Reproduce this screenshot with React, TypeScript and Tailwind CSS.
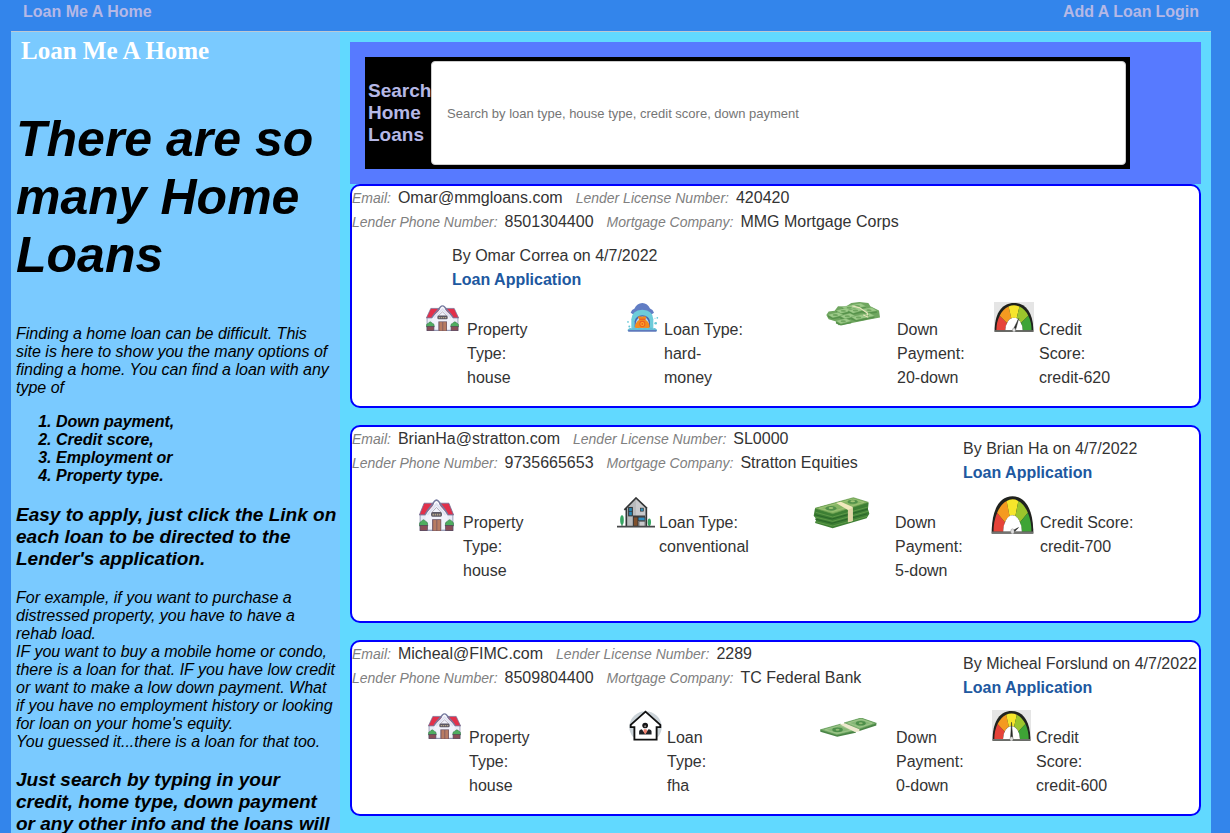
import React from "react";

function HouseIcon({ className }: { className: string }) {
  return (
    <svg className={className} viewBox="0 0 96 76" preserveAspectRatio="none" aria-hidden="true">
      <polygon points="14,10 40,10 28,38 1,38" fill="#e2304a" stroke="#6c6f96" strokeWidth="2" />
      <polygon points="82,10 56,10 68,38 95,38" fill="#e2304a" stroke="#6c6f96" strokeWidth="2" />
      <rect x="3" y="38" width="90" height="36" fill="#e9ebf6" stroke="#7c80a3" strokeWidth="2" />
      <polygon points="48,7 78,35 78,74 18,74 18,35" fill="#f1f2fb" />
      <path d="M17 37 L24 27 L42 6 Q48 -1 54 6 L72 27 L79 37" fill="none" stroke="#757a9f" strokeWidth="4" />
      <path d="M23 38 L48 12 L73 38" fill="none" stroke="#dde1f0" strokeWidth="4" />
      <path d="M36 31 L48 20 L60 31" fill="none" stroke="#a59eaa" strokeWidth="2" />
      <rect x="33" y="31" width="30" height="11" rx="4" fill="#5b5763" />
      <path d="M37 37h22" stroke="#b5a68a" strokeWidth="4" strokeDasharray="4 2" />
      <rect x="36" y="48" width="25" height="28" fill="#6c5261" />
      <rect x="39" y="50" width="9" height="25" fill="#b87b62" />
      <rect x="50" y="50" width="9" height="25" fill="#b87b62" />
      <path d="M1 64 Q0 54 7 53 Q12 45 18 53 Q25 54 24 64Z" fill="#4fad60" stroke="#3c7552" strokeWidth="1.5" />
      <path d="M72 64 Q71 54 78 53 Q84 45 90 53 Q96 54 95 64Z" fill="#4fad60" stroke="#3c7552" strokeWidth="1.5" />
      <rect x="3" y="63" width="20" height="12" fill="#8b4d58" stroke="#5a455b" strokeWidth="2" />
      <rect x="73" y="63" width="20" height="12" fill="#8b4d58" stroke="#5a455b" strokeWidth="2" />
      <path d="M22 74h14m25 0h12" stroke="#777b9c" strokeWidth="2" />
    </svg>
  );
}

function HardMoneyIcon({ className }: { className: string }) {
  return (
    <svg className={className} viewBox="0 0 96 86" preserveAspectRatio="none" aria-hidden="true">
      <path d="M11 29 Q14 19 22 17 Q30 1 46 0 Q62 1 69 16 Q78 19 81 29 L74 33 H18Z" fill="#617dc4" />
      <path d="M13 78 V48 Q14 22 46 20 Q78 22 79 48 V78Z" fill="#6dccda" />
      <path d="M23 72 V54 Q26 37 46 36 Q66 37 69 54 V72Z" fill="#4565b4" />
      <path d="M27 56 Q32 41 46 40 Q60 41 65 56 V73 H25Z" fill="#b8dceb" />
      <path d="M34 45 Q31 39 38 39 L45 41 L53 39 Q60 39 57 45 L54 49 Q69 57 68 74 H23 Q24 57 38 49Z" fill="#f38b1d" />
      <path d="M36 48h20" stroke="#e5552c" strokeWidth="3" />
      <circle cx="46" cy="62" r="9" fill="#ed5e22" />
      <circle cx="46" cy="62" r="4.5" fill="none" stroke="#ffae29" strokeWidth="3" />
      <path d="M2 79 Q8 71 15 76 Q23 70 31 76 Q38 71 46 76 Q54 71 61 76 Q69 70 77 76 Q84 71 90 79 V83 H2Z" fill="#62bfd7" />
      <rect x="3" y="80" width="86" height="5" rx="2" fill="#5e79bc" />
      <circle cx="3" cy="56" r="2.5" fill="#65c7d6" />
      <circle cx="7" cy="70" r="3" fill="#65c7d6" />
      <circle cx="86" cy="60" r="4" fill="#65c7d6" />
      <circle cx="91" cy="44" r="2.5" fill="#65c7d6" />
      <circle cx="84" cy="45" r="1.5" fill="#65c7d6" />
    </svg>
  );
}

function ModernHouseIcon({ className }: { className: string }) {
  return (
    <svg className={className} viewBox="0 0 114 92" preserveAspectRatio="none" aria-hidden="true">
      <polygon points="57,5 87,33 87,87 29,87 29,32" fill="#c9cacc" />
      <polygon points="57,7 57,57 48,57 48,87 29,87 29,32" fill="#b9bbbd" />
      <path d="M22 38 L57 3 L90 34 M28 31 V87 M88 32 V87" fill="none" stroke="#333536" strokeWidth="5" />
      <rect x="35" y="31" width="11" height="25" fill="#2987b4" stroke="#333" strokeWidth="3" />
      <path d="M35 43h11" stroke="#333" strokeWidth="2" />
      <rect x="70" y="33" width="9" height="9" fill="#2c91bd" stroke="#333" strokeWidth="2" />
      <path d="M48 57 H84" stroke="#333" strokeWidth="4" />
      <rect x="62" y="60" width="22" height="10" fill="#2c8fc2" stroke="#333" strokeWidth="2" />
      <rect x="49" y="59" width="14" height="28" fill="#80502c" stroke="#333" strokeWidth="3" />
      <rect x="66" y="73" width="18" height="14" fill="#c9cacc" stroke="#555" strokeWidth="2" />
      <path d="M15 61V87M97 72V87" stroke="#34764a" strokeWidth="3" />
      <ellipse cx="15" cy="68" rx="5.5" ry="14" fill="#37a563" />
      <ellipse cx="97" cy="75" rx="5" ry="11" fill="#37a563" />
      <path d="M0 88H114" stroke="#47494a" strokeWidth="5" />
    </svg>
  );
}

function FhaIcon({ className }: { className: string }) {
  return (
    <svg className={className} viewBox="0 0 98 94" preserveAspectRatio="none" aria-hidden="true">
      <path d="M12 82 A48 48 0 1 1 86 82Z" fill="#ccd4d9" />
      <path d="M16 90V52H5V45L49 5L93 45V52H82V90Z" fill="#fff" stroke="#101010" strokeWidth="5.5" />
      <circle cx="48" cy="47" r="8.5" fill="#171717" />
      <circle cx="48" cy="49" r="3" fill="#8d8683" />
      <path d="M30 74V65Q30 59 38 58L48 71L58 58Q67 59 67 65V74Z" fill="#202226" />
      <path d="M41 57L48 70L56 57Z" fill="#fff" />
      <path d="M44 58h8l2 7-6 9-5-9Z" fill="#ef826f" />
    </svg>
  );
}

function CashPileIcon({ className }: { className: string }) {
  const bundles = [
    [74, 2, 4], [48, 8, 2], [108, 14, 6], [30, 18, 1], [66, 18, -2],
    [6, 31, 1], [100, 32, 3], [42, 35, 0], [76, 38, 2], [30, 50, 1],
  ];
  return (
    <svg className={className} viewBox="0 0 162 74" preserveAspectRatio="none" aria-hidden="true">
      <path d="M1 40L8 29L26 27L36 13L60 14L76 3L100 0L127 3L133 13L159 26L162 48L130 54L100 60L70 66L38 72L30 60L8 53Z" fill="#6fa65f" />
      {bundles.map(([x, y, r]) => (
        <g key={`${x}-${y}`} transform={`translate(${x} ${y}) rotate(${r})`}>
          <path d="M0 8L30 0L46 8L15 17Z" fill="#9dcb89" stroke="#75aa66" strokeWidth="1" />
          <path d="M0 10L15 18L46 10V15L15 22L0 16Z" fill="#56924b" />
          <ellipse cx="22" cy="9" rx="8" ry="3" fill="#6fa65f" />
        </g>
      ))}
      <path d="M79 12l22 6 23 16v8M112 40l15 7" fill="none" stroke="#e6e5bd" strokeWidth="4" />
    </svg>
  );
}

function CashStackIcon({ className }: { className: string }) {
  return (
    <svg className={className} viewBox="0 0 168 96" preserveAspectRatio="none" aria-hidden="true">
      <path d="M6 34L119 3L164 17L162 36L166 50L158 64L58 94L6 78L10 66L2 56Z" fill="#3d7f34" />
      <path d="M8 74L58 87L160 58M6 60L58 73L162 43M8 46L58 60L162 30" fill="none" stroke="#6fa552" strokeWidth="2" />
      <path d="M6 66L56 79L160 50M6 53L56 66L162 36" fill="none" stroke="#2b6629" strokeWidth="3" />
      <path d="M6 34L119 2L163 16L58 50Z" fill="#86b664" stroke="#669a4a" strokeWidth="2" />
      <path d="M18 34L117 7L150 16L59 43Z" fill="none" stroke="#a5c67d" strokeWidth="2" />
      <ellipse cx="53" cy="34" rx="16" ry="7" fill="#53914a" />
      <ellipse cx="53" cy="33" rx="7" ry="3" fill="#a0c575" />
      <ellipse cx="117" cy="14" rx="15" ry="6" fill="#53914a" />
      <ellipse cx="117" cy="13" rx="7" ry="3" fill="#a0c575" />
      <path d="M68 18L82 14L117 30V72L103 76V39Z" fill="#f1e9bd" />
      <path d="M103 39L117 32V72L103 76Z" fill="#e0d6a6" />
    </svg>
  );
}

function CashNotesIcon({ className }: { className: string }) {
  return (
    <svg className={className} viewBox="0 0 172 58" preserveAspectRatio="none" aria-hidden="true">
      <path d="M1 37L61 20L108 40V45L52 57L1 42Z" fill="#4a8446" />
      <path d="M73 16L124 0L170 16V23L119 40L73 21Z" fill="#4a8446" />
      <path d="M1 36L61 19L108 38L51 52Z" fill="#85b776" stroke="#5d9854" strokeWidth="2" />
      <path d="M73 15L124 0L170 16L119 34Z" fill="#85b776" stroke="#5d9854" strokeWidth="2" />
      <path d="M16 36L60 23L94 37L52 47Z" fill="none" stroke="#a9cb92" strokeWidth="2" />
      <path d="M86 15L124 4L157 16L120 28Z" fill="none" stroke="#a9cb92" strokeWidth="2" />
      <ellipse cx="53" cy="36" rx="16" ry="7" fill="#4d8f4a" />
      <ellipse cx="53" cy="36" rx="6" ry="3" fill="#8fba74" />
      <ellipse cx="123" cy="16" rx="15" ry="7" fill="#4d8f4a" />
      <ellipse cx="123" cy="16" rx="6" ry="3" fill="#8fba74" />
      <path d="M60 20L75 16L119 34V41L105 43Z" fill="#eee9cf" />
    </svg>
  );
}

const WEDGES = ["#e64339", "#f49a20", "#f6e52b", "#9bc52c", "#3ea436"];

function gaugePoint(rx: number, ry: number, degrees: number) {
  const a = (degrees * Math.PI) / 180;
  return `${(60 - rx * Math.cos(a)).toFixed(1)} ${(85 - ry * Math.sin(a)).toFixed(1)}`;
}

function GaugeIcon({ className, needle, reach, plain }: { className: string; needle: number; reach: number; plain?: boolean }) {
  return (
    <svg className={className} viewBox="0 0 120 90" preserveAspectRatio="none" aria-hidden="true">
      {!plain && <rect width="120" height="90" fill="#e5e5e5" />}
      <path d="M2 89V80C4 31 25 3 60 3S116 31 118 80V89Z" fill="#20221e" />
      {WEDGES.map((color, i) => (
        <path
          key={color}
          fill={color}
          d={`M${gaugePoint(53, 75, i * 36)} A53 75 0 0 1 ${gaugePoint(53, 75, (i + 1) * 36)} L${gaugePoint(26, 38, (i + 1) * 36)} A26 38 0 0 0 ${gaugePoint(26, 38, i * 36)}Z`}
        />
      ))}
      <path d="M34 85A26 38 0 0 1 86 85Z" fill="#fff" />
      <path d="M2 87H118" stroke="#72736f" strokeWidth="5" />
      <path d={`M57 84L${gaugePoint(reach, reach * 1.45, needle)}L64 86Z`} fill="#292a28" stroke="#292a28" strokeWidth="1.5" />
      <ellipse cx="60" cy="84" rx="5" ry="6" fill="#dedede" stroke="#777" strokeWidth="1" />
    </svg>
  );
}

type Feature = { icon: React.ReactNode; lines: string[] };

type Loan = {
  email: string;
  license: string;
  phone: string;
  company: string;
  author: string;
  stacked?: boolean;
  columns: string;
  features: Feature[];
};

const loans: Loan[] = [
  {
    email: "Omar@mmgloans.com",
    license: "420420",
    phone: "8501304400",
    company: "MMG Mortgage Corps",
    author: "Omar Correa",
    stacked: true,
    columns: "pl-[74px] pb-4 grid-cols-[41px_160px_37px_162px_71px_97px_45px_1fr]",
    features: [
      { icon: <HouseIcon className="mt-[3px] h-[26px] w-[33px]" />, lines: ["Property", "Type:", "house"] },
      { icon: <HardMoneyIcon className="mt-px h-[29px] w-[32px]" />, lines: ["Loan Type:", "hard-", "money"] },
      { icon: <CashPileIcon className="h-[24px] w-[54px]" />, lines: ["Down", "Payment:", "20-down"] },
      { icon: <GaugeIcon className="h-[30px] w-[40px]" needle={120} reach={28} />, lines: ["Credit", "Score:", "credit-620"] },
    ],
  },
  {
    email: "BrianHa@stratton.com",
    license: "SL0000",
    phone: "9735665653",
    company: "Stratton Equities",
    author: "Brian Ha",
    columns: "pl-[67px] pb-[38px] grid-cols-[44px_154px_42px_154px_82px_96px_49px_1fr]",
    features: [
      { icon: <HouseIcon className="mt-[4px] h-[32px] w-[35px]" />, lines: ["Property", "Type:", "house"] },
      { icon: <ModernHouseIcon className="mt-[2px] h-[31px] w-[38px]" />, lines: ["Loan Type:", "conventional"] },
      { icon: <CashStackIcon className="mt-[2px] h-[32px] w-[57px]" />, lines: ["Down", "Payment:", "5-down"] },
      { icon: <GaugeIcon className="h-[39px] w-[43px]" needle={158} reach={18} plain />, lines: ["Credit Score:", "credit-700"] },
    ],
  },
  {
    email: "Micheal@FIMC.com",
    license: "2289",
    phone: "8509804400",
    company: "TC Federal Bank",
    author: "Micheal Forslund",
    columns: "pl-[76px] pb-4 grid-cols-[41px_160px_38px_153px_76px_96px_44px_1fr]",
    features: [
      { icon: <HouseIcon className="mt-[3px] h-[26px] w-[33px]" />, lines: ["Property", "Type:", "house"] },
      { icon: <FhaIcon className="h-[31px] w-[33px]" />, lines: ["Loan", "Type:", "fha"] },
      { icon: <CashNotesIcon className="mt-[8px] h-[19px] w-[57px]" />, lines: ["Down", "Payment:", "0-down"] },
      { icon: <GaugeIcon className="h-[31px] w-[39px]" needle={90} reach={34} />, lines: ["Credit", "Score:", "credit-600"] },
    ],
  },
];

function Field({ name, value }: { name: string; value: string }) {
  return (
    <div className="flex items-baseline gap-[7px]">
      <dt className="text-sm leading-6 italic text-[#808080]">{name}:</dt>
      <dd>{value}</dd>
    </div>
  );
}

function LoanCard({ loan }: { loan: Loan }) {
  return (
    <article className="rounded-[10px] border-2 border-[#0000ff] bg-white text-base leading-6 text-[#333]">
      <div className={loan.stacked ? "" : "flex justify-between"}>
        <dl className="whitespace-nowrap">
          <div className="flex gap-[13px]">
            <Field name="Email" value={loan.email} />
            <Field name="Lender License Number" value={loan.license} />
          </div>
          <div className="flex gap-[13px]">
            <Field name="Lender Phone Number" value={loan.phone} />
            <Field name="Mortgage Company" value={loan.company} />
          </div>
        </dl>
        <div className={loan.stacked ? "mt-[10px] pl-[100px]" : "mt-[10px] w-[236px] whitespace-nowrap"}>
          <p>By {loan.author} on 4/7/2022</p>
          <a href="#apply" className="block font-bold text-[#2058a0]">
            Loan Application
          </a>
        </div>
      </div>
      <div className={`mt-[10px] grid ${loan.columns}`}>
        {loan.features.map((f) => (
          <React.Fragment key={f.lines.join(" ")}>
            <div>{f.icon}</div>
            <p className="mt-4 whitespace-nowrap">
              {f.lines.map((line) => (
                <span key={line} className="block">
                  {line}
                </span>
              ))}
            </p>
          </React.Fragment>
        ))}
      </div>
    </article>
  );
}

export default function App() {
  return (
    <div className="flex min-h-screen flex-col bg-[#3385eb] pr-[19px] pl-[11px] font-['Liberation_Sans',Arial,sans-serif]">
      <nav className="flex h-[31px] justify-between px-3 font-bold leading-6 text-[#b5b8e6]">
        <a href="#home">Loan Me A Home</a>
        <div className="flex gap-1">
          <a href="#add">Add A Loan</a>
          <a href="#login">Login</a>
        </div>
      </nav>
      <div className="flex grow border-t border-[#bcc8d4] bg-[#61d9ff]">
        <aside className="w-[329px] shrink-0 bg-[#7acaff] pr-[3px] pl-[5px] text-base leading-[18px] italic text-black">
          <div className="h-[78px] pl-[5px] font-['Liberation_Serif',serif] text-[25px] leading-[38px] font-bold not-italic text-white">
            Loan Me A Home
          </div>
          <h1 className="text-[50px] leading-[58px] font-bold">There are so many Home Loans</h1>
          <p className="mt-[41px] pr-1">
            Finding a home loan can be difficult. This site is here to show you the many options of finding a home. You
            can find a loan with any type of
          </p>
          <ol className="my-4 list-decimal pl-10 font-bold">
            <li>Down payment,</li>
            <li>Credit score,</li>
            <li>Employment or</li>
            <li>Property type.</li>
          </ol>
          <h3 className="my-[19px] text-[19px] leading-[22px] font-bold">
            Easy to apply, just click the Link on each loan to be directed to the Lender's application.
          </h3>
          <p>
            For example, if you want to purchase a distressed property, you have to have a rehab load.
            <br />
            IF you want to buy a mobile home or condo, there is a loan for that. IF you have low credit or want to make
            a low down payment. What if you have no employment history or looking for loan on your home's equity.
            <br />
            You guessed it...there is a loan for that too.
          </p>
          <h3 className="mt-[18px] text-[19px] leading-[22px] font-bold">
            Just search by typing in your credit, home type, down payment or any other info and the loans will
          </h3>
        </aside>
        <main className="min-w-0 grow p-[10px]">
          <div className="bg-[#577aff] py-[15px] pr-[71px] pl-[15px]">
            <form className="flex items-center bg-black py-1 pr-1 pl-[3px]" onSubmit={(e) => e.preventDefault()}>
              <label htmlFor="search" className="w-[63px] shrink-0 text-[19px] leading-[22px] font-bold text-[#b5b8e6]">
                Search Home Loans
              </label>
              <input
                id="search"
                type="text"
                placeholder="Search by loan type, house type, credit score, down payment"
                className="h-[104px] min-w-0 grow rounded-[4px] border border-[#ccc] bg-white px-[15px] text-[13px] text-[#333] placeholder:text-[#757575]"
              />
            </form>
          </div>
          <div className="flex flex-col gap-[17px]">
            {loans.map((loan) => (
              <LoanCard key={loan.email} loan={loan} />
            ))}
          </div>
        </main>
      </div>
    </div>
  );
}
